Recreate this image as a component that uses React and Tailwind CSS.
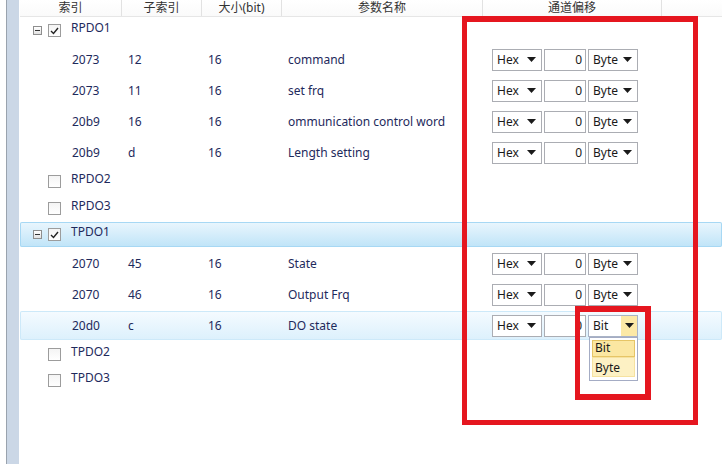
import React from "react";

const FONT = { fontFamily: '"Noto Sans", "Noto Sans CJK SC", sans-serif' };

function Arrow() {
  return (
    <svg width="9" height="5" viewBox="0 0 9 5" className="shrink-0">
      <polygon points="0,0 9,0 4.5,5" fill="#1a1a1a" />
    </svg>
  );
}

function Select({ value, open }) {
  if (open) {
    return (
      <div className="relative w-[50px] h-[22px] border border-[#a9b3c6] bg-white flex items-center">
        <span className="pl-[4px] flex-1">{value}</span>
        <div className="w-[16px] h-full bg-[#fce9a6] flex items-center justify-center">
          <Arrow />
        </div>
        <div className="absolute top-[21px] left-[0px] w-[49px] h-[44px] border border-[#a4acc4] bg-white p-[2px] flex flex-col">
          <div className="h-[17px] bg-[#fbe7a2] border border-[#e6c566] flex items-center pl-[2px] leading-none">Bit</div>
          <div className="h-[20px] bg-[#fdf1c4] border border-[#f6e2a0] flex items-center pl-[2px] pt-[2px] leading-none">Byte</div>
        </div>
      </div>
    );
  }
  return (
    <div className="w-[50px] h-[22px] border border-[#abadb3] bg-white flex items-center justify-between pl-[4px] pr-[5px]">
      <span>{value}</span>
      <Arrow />
    </div>
  );
}

function Controls({ bit }) {
  return (
    <div className="flex items-center gap-[2px] text-[#1a1a1a]">
      <Select value="Hex" />
      <div className="w-[42px] h-[22px] border border-[#abadb3] bg-white flex items-center justify-end pr-[3px]">0</div>
      <Select value={bit ? "Bit" : "Byte"} open={bit} />
    </div>
  );
}

function DataRow({ idx, sub, size, name, highlight, bit }) {
  const inner = (
    <>
      <div className="w-[102px] pl-[52px]">{idx}</div>
      <div className="w-[80px] pl-[6px]">{sub}</div>
      <div className="w-[80px] pl-[6px]">{size}</div>
      <div className="w-[201px] pl-[6px] whitespace-nowrap">{name}</div>
      <div className="w-[179px] pl-[9px]">
        <Controls bit={bit} />
      </div>
    </>
  );
  if (highlight) {
    return (
      <div className="h-[31px] py-[1px]">
        <div className="h-full flex items-center rounded-[2px] shadow-[inset_0_0_0_1px_#cde9f9] bg-gradient-to-b from-[#f5fbff] to-[#dcf0fc]">
          {inner}
        </div>
      </div>
    );
  }
  return <div className="h-[31px] flex items-center">{inner}</div>;
}

function Checkbox({ checked }) {
  return (
    <div className="w-[13px] h-[13px] border border-[#9c9c9c] bg-gradient-to-b from-[#f4f4f4] to-white flex items-center justify-center">
      {checked && (
        <svg width="9" height="8" viewBox="0 0 9 8">
          <polyline points="1,4 3.5,6.5 8,1" fill="none" stroke="#222" strokeWidth="1.4" />
        </svg>
      )}
    </div>
  );
}

function Expander() {
  return (
    <div className="w-[9px] h-[9px] border border-[#8e8e8e] bg-gradient-to-b from-white to-[#e2e2e2] flex items-center justify-center">
      <div className="w-[5px] h-[1px] bg-[#333]" />
    </div>
  );
}

function GroupRow({ label, checked, expanded, h, highlight }) {
  const content = (
    <>
      <div className="w-[13px] mt-[9px] ml-[13px]">{expanded && <Expander />}</div>
      <div className="ml-[2px] mt-[7px]">
        <Checkbox checked={checked} />
      </div>
      <div className="ml-[10px] mt-[2px]">{label}</div>
    </>
  );
  if (highlight) {
    return (
      <div className={`${h} py-[1px]`}>
        <div className="h-full flex items-start rounded-[2px] shadow-[inset_0_0_0_1px_#a7d8f4] bg-gradient-to-b from-[#eaf6fd] to-[#bfe4f8]">
          <div className="flex items-start -mt-[1px]">{content}</div>
        </div>
      </div>
    );
  }
  return <div className={`${h} flex items-start`}>{content}</div>;
}

export default function App() {
  return (
    <div
      className="relative w-[722px] h-[464px] overflow-hidden bg-white flex text-[12px] text-[#1e2a5c]"
      style={FONT}
    >
      <div className="w-[6px] bg-white" />
      <div className="w-[1px] bg-[#9aa3ae]" />
      <div className="w-[12px] bg-[#cbd7e6]" />
      <div className="w-[1px] bg-white" />
      <div className="flex-1 flex flex-col">
        <div className="h-[17px] flex border-b border-[#e6e6e6] text-[#333] bg-gradient-to-b from-white to-[#fafafa] shrink-0">
          <div className="w-[102px] border-r border-[#e2e2e2] flex items-center justify-center">索引</div>
          <div className="w-[80px] border-r border-[#e2e2e2] flex items-center justify-center">子索引</div>
          <div className="w-[80px] border-r border-[#e2e2e2] flex items-center justify-center">大小(bit)</div>
          <div className="w-[201px] border-r border-[#e2e2e2] flex items-center justify-center">参数名称</div>
          <div className="w-[179px] border-r border-[#e2e2e2] flex items-center justify-center">通道偏移</div>
          <div className="flex-1" />
        </div>
        <GroupRow label="RPDO1" checked expanded h="h-[27px]" />
        <DataRow idx="2073" sub="12" size="16" name="command" />
        <DataRow idx="2073" sub="11" size="16" name="set frq" />
        <DataRow idx="20b9" sub="16" size="16" name="ommunication control word" />
        <DataRow idx="20b9" sub="d" size="16" name="Length setting" />
        <GroupRow label="RPDO2" h="h-[27px]" />
        <GroupRow label="RPDO3" h="h-[26px]" />
        <GroupRow label="TPDO1" checked expanded highlight h="h-[27px]" />
        <DataRow idx="2070" sub="45" size="16" name="State" />
        <DataRow idx="2070" sub="46" size="16" name="Output Frq" />
        <DataRow idx="20d0" sub="c" size="16" name="DO state" highlight bit />
        <GroupRow label="TPDO2" h="h-[26px]" />
        <GroupRow label="TPDO3" h="h-[26px]" />
      </div>

      <div className="absolute left-[462px] top-[16px] w-[236px] h-[409px] border-[5px] border-t-[6px] border-[#e5161f]" />
      <div className="absolute left-[575px] top-[306px] w-[76px] h-[94px] border-[6px] border-l-[5px] border-[#e5161f]" />
    </div>
  );
}
